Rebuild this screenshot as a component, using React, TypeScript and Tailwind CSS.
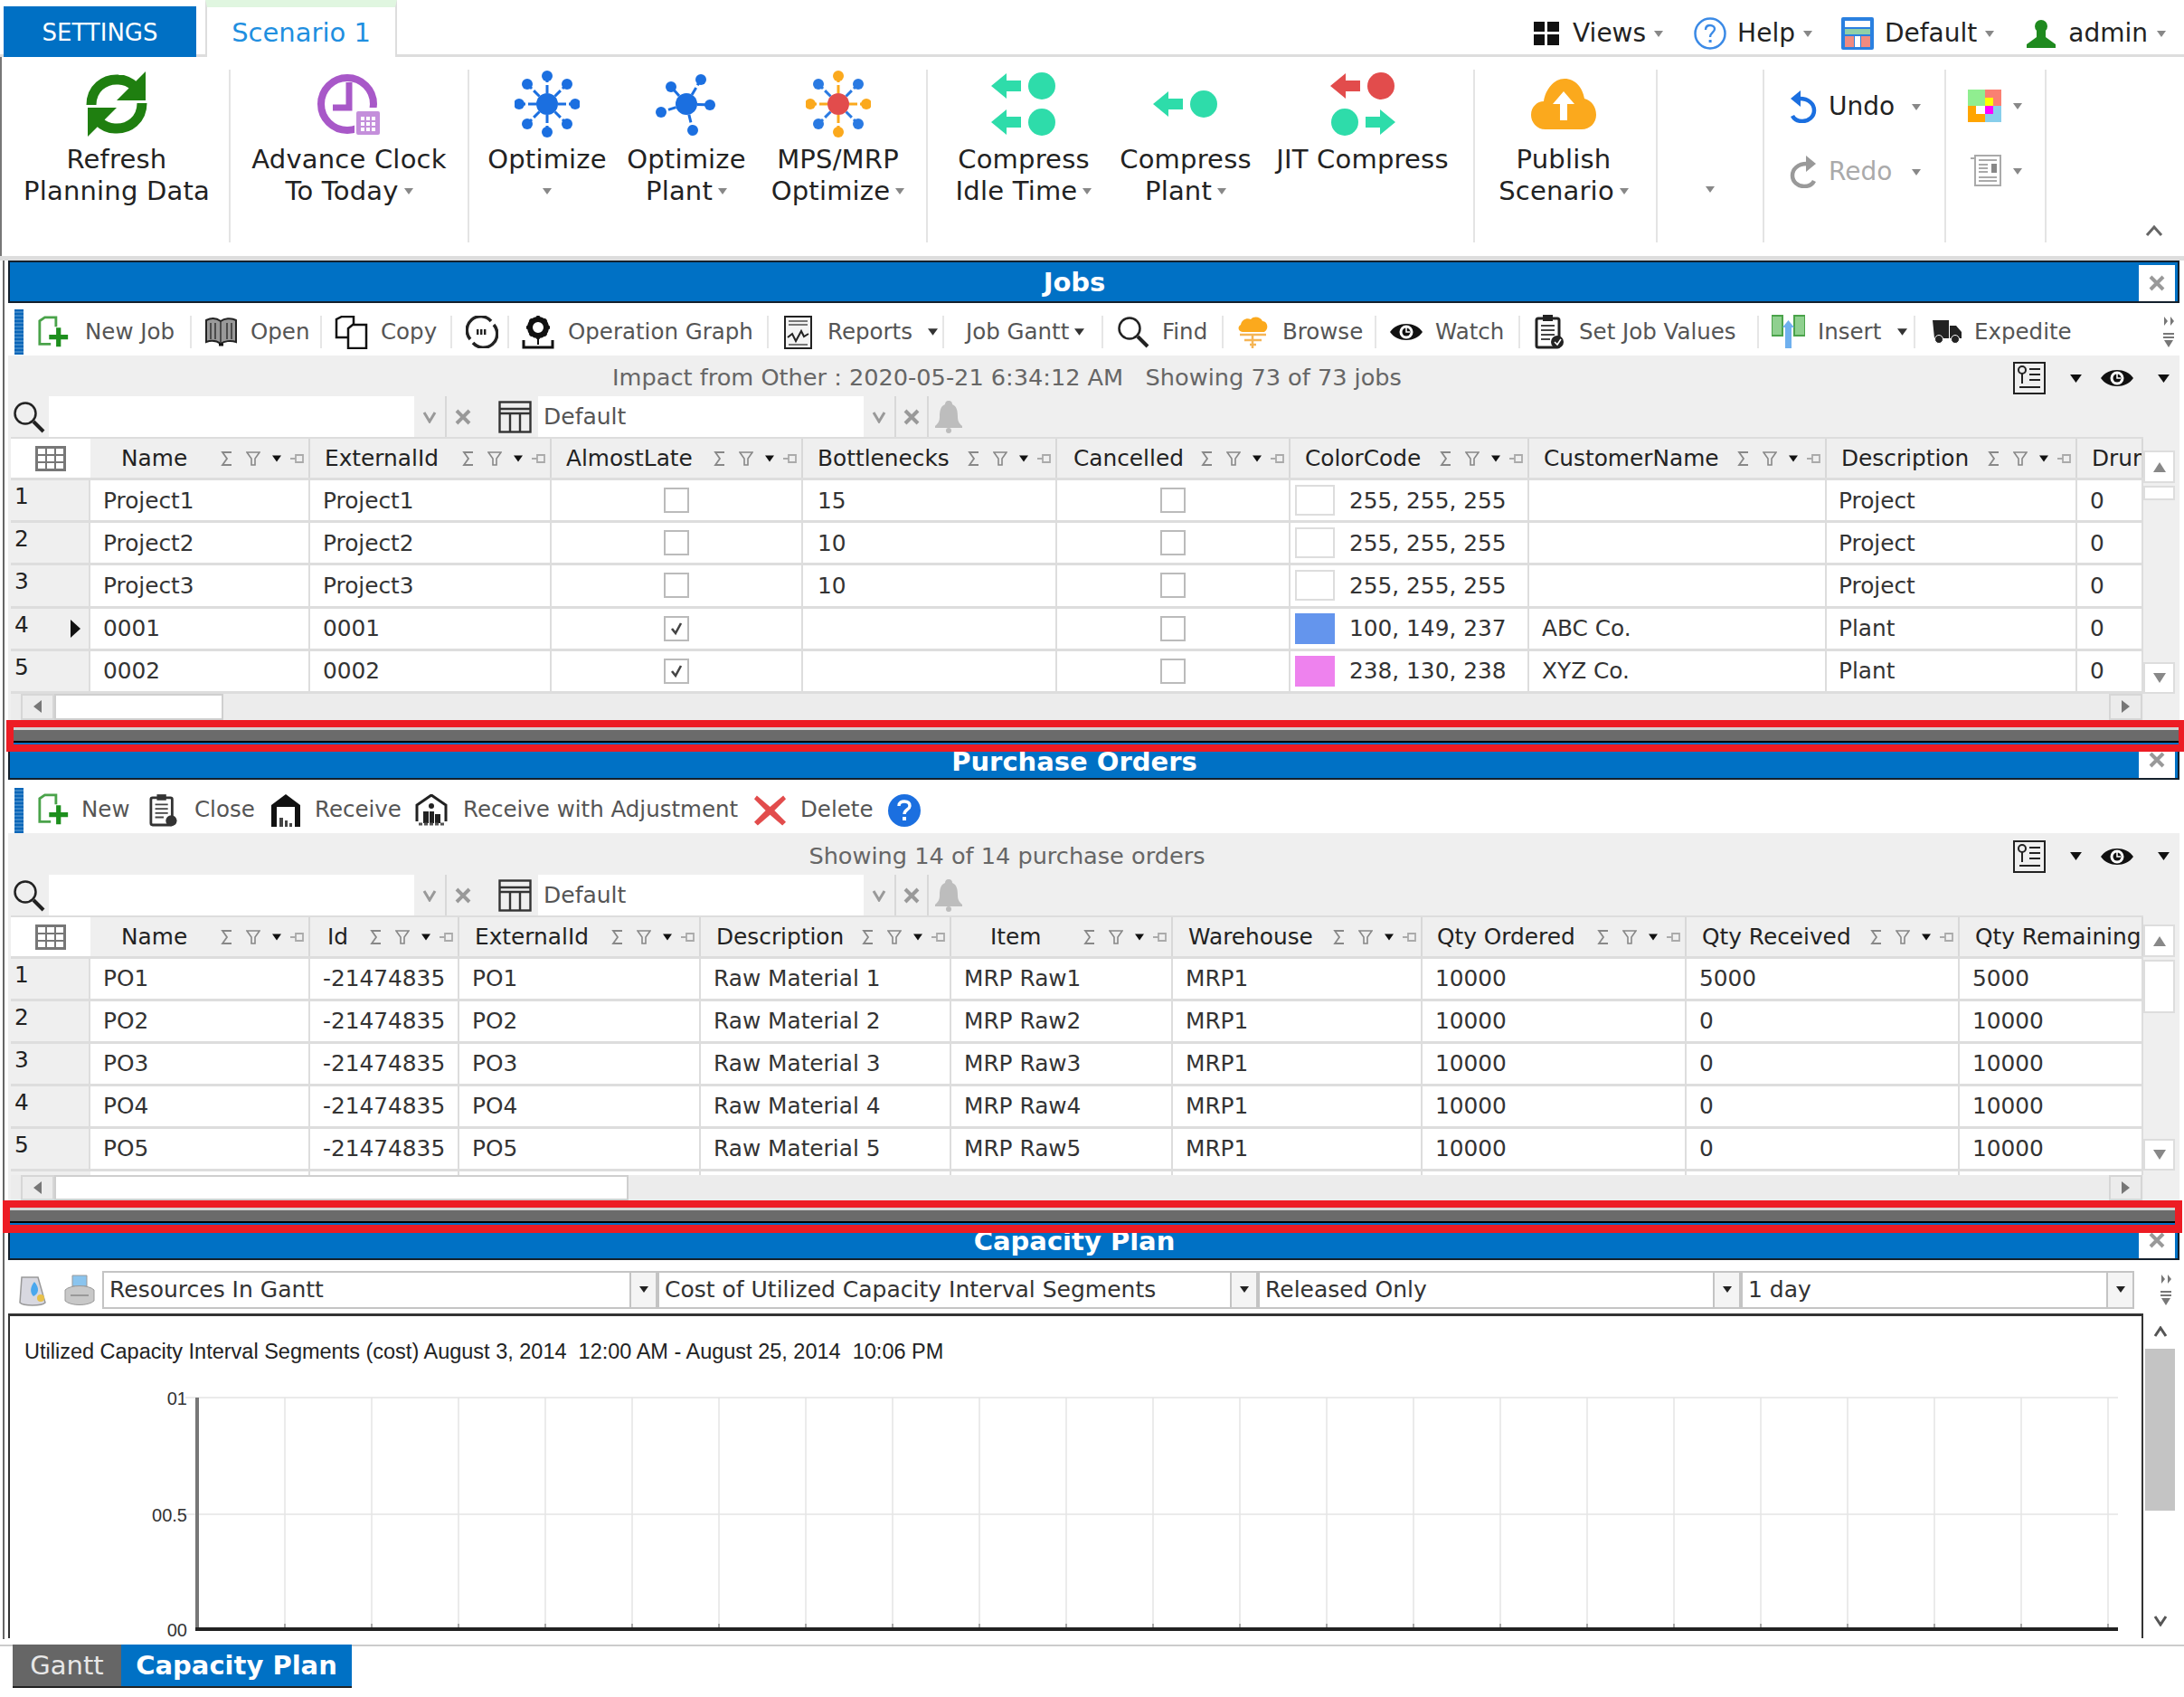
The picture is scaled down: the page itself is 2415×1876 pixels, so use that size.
import React from "react";

const Caret = ({ cls = "text-[#888]", w = 10, h = 7 }: { cls?: string; w?: number; h?: number }) => (
  <svg width={w} height={h} viewBox="0 0 10 7" className={`shrink-0 ${cls}`}><path d="M0 0H10L5 7Z" fill="currentColor" /></svg>
);

const Refresh = () => (
  <svg width="72" height="74" viewBox="0 0 72 74">
    <g fill="none" stroke="#1f7f10" strokeWidth="11">
      <path d="M8 38C8 20 22 9 38 10C46 10 51 13 56 18" />
      <path d="M64 36C64 54 50 65 34 64C26 64 21 61 16 56" />
    </g>
    <path d="M68 1V33H36Z" fill="#1f7f10" />
    <path d="M4 73V41H36Z" fill="#1f7f10" />
  </svg>
);
const ClockCal = () => (
  <svg width="72" height="72" viewBox="0 0 72 72">
    <circle cx="34" cy="36" r="29" fill="none" stroke="#a858c8" strokeWidth="8" />
    <path d="M36 12V40H18" fill="none" stroke="#a858c8" strokeWidth="7" />
    <rect x="42" y="40" width="29" height="31" fill="#fff" />
    <rect x="44" y="44" width="26" height="26" rx="2" fill="#c48fdb" />
    <g fill="#fff">
      {[49, 55, 61].map((x) => [50, 56, 62].map((y) => <rect key={x + "-" + y} x={x} y={y} width="4" height="4" />))}
    </g>
  </svg>
);
const Hub = ({ c, nodes, center = c, cx = 36, cy = 37, r = 12 }: { c: string; center?: string; cx?: number; cy?: number; r?: number; nodes: [number, number, string?][] }) => (
  <svg width="72" height="74" viewBox="0 0 72 74">
    {nodes.map(([x, y, col], i) => (
      <g key={i}>
        <line x1={cx} y1={cy} x2={x} y2={y} stroke={col || c} strokeWidth="3" strokeDasharray="9 3" />
        <circle cx={x} cy={y} r="6" fill={col || c} />
      </g>
    ))}
    <circle cx={cx} cy={cy} r={r} fill={center} />
  </svg>
);
const Arrow = ({ dir, c, y, x }: { dir: "l" | "r"; c: string; y: number; x: number }) => (
  <path d={dir === "l" ? `M${x} ${y}L${x + 17} ${y - 14}V${y - 6}H${x + 33}V${y + 6}H${x + 17}V${y + 14}Z` : `M${x + 33} ${y}L${x + 16} ${y - 14}V${y - 6}H${x}V${y + 6}H${x + 16}V${y + 14}Z`} fill={c} />
);
const Teal = "#2edcaa";
const Red = "#e24c4c";
const CompressIdle = () => (
  <svg width="72" height="72" viewBox="0 0 72 72">
    <Arrow dir="l" c={Teal} y={16} x={0} /><circle cx="56" cy="16" r="15" fill={Teal} />
    <Arrow dir="l" c={Teal} y={56} x={0} /><circle cx="56" cy="56" r="15" fill={Teal} />
  </svg>
);
const CompressPlant = () => (
  <svg width="72" height="32" viewBox="0 0 72 32">
    <Arrow dir="l" c={Teal} y={16} x={0} /><circle cx="56" cy="16" r="15" fill={Teal} />
  </svg>
);
const JIT = () => (
  <svg width="72" height="72" viewBox="0 0 72 72">
    <Arrow dir="l" c={Red} y={16} x={0} /><circle cx="56" cy="16" r="15" fill={Red} />
    <circle cx="16" cy="56" r="15" fill={Teal} /><Arrow dir="r" c={Teal} y={56} x={39} />
  </svg>
);
const Cloud = () => (
  <svg width="72" height="56" viewBox="0 0 72 56">
    <path d="M16 56C6 56 0 48 0 40C0 31 7 25 14 25C16 12 25 0 37 0C49 0 57 10 59 22C67 24 72 31 72 40C72 49 65 56 56 56Z" fill="#fba91d" />
    <path d="M36 14L48 28H40V46H32V28H24Z" fill="#fff" />
  </svg>
);
const Undo = ({ c, flip }: { c: string; flip?: boolean }) => (
  <svg width="32" height="36" viewBox="0 0 32 36" className={flip ? "-scale-x-100" : ""}>
    <path d="M12 9C22 9 28 15 28 22C28 29 22 34 15 34C10 34 6 32 4 28" fill="none" stroke={c} strokeWidth="4.5" />
    <path d="M13 0V18L2 9Z" fill={c} />
  </svg>
);
const Palette = () => (
  <svg width="37" height="36" viewBox="0 0 37 36">
    <rect width="19" height="18" fill="#90ee90" /><rect x="19" width="18" height="18" fill="#fa8072" />
    <rect y="18" width="19" height="18" fill="#ffa500" /><rect x="19" y="18" width="18" height="18" fill="#87ceeb" />
    <rect x="19" y="9" width="9" height="9" fill="#ffff00" /><rect x="19" y="18" width="9" height="9" fill="#ff00ff" /><rect x="9" y="18" width="10" height="9" fill="#fff" />
  </svg>
);
const NewsDoc = () => (
  <svg width="37" height="36" viewBox="0 0 37 36" fill="none" stroke="#aaa" strokeWidth="2">
    <path d="M3 4H8V34H30V32" /><rect x="8" y="1" width="28" height="33" fill="#fff" />
    <path d="M12 6H32M12 25H32M12 29H32M12 11H22M12 15H22M12 19H22" /><rect x="26" y="10" width="6" height="10" fill="#888" stroke="none" />
  </svg>
);

const NewDoc = () => (
  <svg width="39" height="37" viewBox="0 0 39 37" fill="none">
    <path d="M16 32H3V5L9 1H22V12" stroke="#4aa34a" strokeWidth="3" />
    <path d="M25 13V35M14 24H36" stroke="#1d8f1d" strokeWidth="5.5" />
  </svg>
);
const Book = () => (
  <svg width="37" height="32" viewBox="0 0 37 32">
    <path d="M2 3C8 0 14 1 18 4C22 1 29 0 35 3V27C29 25 22 26 18 29C14 26 8 25 2 27Z" fill="#999" stroke="#222" strokeWidth="2" />
    <path d="M7 6V24M12 6V24M25 6V24M30 6V24M18 4V29" stroke="#333" strokeWidth="1.5" />
    <path d="M16 30H21" stroke="#111" strokeWidth="3" />
  </svg>
);
const Copy = () => (
  <svg width="37" height="37" viewBox="0 0 37 37" fill="#fff" stroke="#111" strokeWidth="2.5">
    <path d="M2 24V4L8 1H21V24Z" /><path d="M15 36V14L20 10H35V36Z" />
  </svg>
);
const AbcCycle = () => (
  <svg width="36" height="36" viewBox="0 0 36 36" fill="none" stroke="#222" strokeWidth="3.5">
    <path d="M5 26A15 15 0 0 1 28 6" /><path d="M31 10A15 15 0 0 1 8 30" />
    <path d="M12 18H24" strokeWidth="6" strokeDasharray="2.4 1.6" />
  </svg>
);
const GearTray = () => (
  <svg width="37" height="37" viewBox="0 0 37 37">
    <circle cx="18" cy="13" r="9" fill="none" stroke="#111" strokeWidth="6" />
    <path d="M18 0V26M5 13H31M9 4L27 22M27 4L9 22" stroke="#111" strokeWidth="3.5" strokeDasharray="5 16" />
    <circle cx="18" cy="13" r="3.5" fill="#fff" />
    <path d="M2 27V35H34V27" fill="none" stroke="#111" strokeWidth="3" />
    <path d="M18 24V32" stroke="#111" strokeWidth="2" />
  </svg>
);
const Report = () => (
  <svg width="33" height="37" viewBox="0 0 33 37" fill="none" stroke="#222" strokeWidth="2">
    <rect x="2" y="1" width="29" height="35" fill="#f4f4f4" />
    <path d="M6 6H27M6 10H27" stroke="#777" />
    <path d="M5 24L10 20L14 28L20 17L23 23L28 20" strokeWidth="2" />
    <path d="M6 32H27" stroke="#777" />
  </svg>
);
const Mag = ({ s = 36 }: { s?: number }) => (
  <svg width={s} height={s} viewBox="0 0 36 36" fill="none" stroke="#222">
    <circle cx="14" cy="14" r="11.5" strokeWidth="2.5" /><path d="M23 23L34 34" strokeWidth="4" />
  </svg>
);
const Browse = () => (
  <svg width="35" height="36" viewBox="0 0 35 36">
    <path d="M6 18C1 18 0 12 4 10C5 4 11 2 15 4C18 0 26 1 28 6C33 6 36 14 30 18Z" fill="#fba91d" />
    <path d="M3 21H32M8 27H27M14 32H21M17 20V36" stroke="#f5b555" strokeWidth="2.5" />
  </svg>
);
const Eye = ({ w = 36, h = 24 }: { w?: number; h?: number }) => (
  <svg width={w} height={h} viewBox="0 0 36 24">
    <path d="M0 12C8 0 28 0 36 12C28 24 8 24 0 12Z" fill="#111" />
    <circle cx="18" cy="12" r="7.5" fill="#fff" /><circle cx="18" cy="12" r="4.5" fill="#111" />
    <path d="M18 7V12H22" stroke="#fff" strokeWidth="1.5" fill="none" />
  </svg>
);
const Clip = () => (
  <svg width="33" height="38" viewBox="0 0 33 38">
    <rect x="2" y="4" width="25" height="32" rx="2" fill="#fff" stroke="#222" strokeWidth="3" />
    <rect x="9" y="0" width="11" height="7" fill="#222" />
    <path d="M7 12H22M7 17H22M7 22H22M7 27H17" stroke="#444" strokeWidth="2" />
    <circle cx="25" cy="30" r="7" fill="#222" /><path d="M22 30L25 33L29 27" stroke="#fff" strokeWidth="1.6" fill="none" />
  </svg>
);
const Insert = () => (
  <svg width="37" height="38" viewBox="0 0 37 38">
    <rect x="0" y="1" width="12" height="22" fill="#8fd08f" stroke="#4aa34a" strokeWidth="2" />
    <rect x="25" y="1" width="12" height="22" fill="#8fd08f" stroke="#4aa34a" strokeWidth="2" />
    <path d="M18.5 6L25 14H22V37H15V14H12Z" fill="#6fb0ee" />
  </svg>
);
const Truck = () => (
  <svg width="36" height="26" viewBox="0 0 36 26">
    <path d="M4 0H22V20H6ZM23 6H30L36 13V20H23Z" fill="#222" />
    <circle cx="11" cy="21" r="4.5" fill="#222" stroke="#fff" /><circle cx="29" cy="21" r="4.5" fill="#222" stroke="#fff" />
  </svg>
);
const ClipSmall = () => (
  <svg width="31" height="38" viewBox="0 0 33 38">
    <rect x="2" y="4" width="25" height="32" rx="2" fill="#fff" stroke="#333" strokeWidth="3" />
    <rect x="9" y="0" width="11" height="7" fill="#333" />
    <path d="M7 12H22M7 17H22M7 22H22M7 27H17" stroke="#444" strokeWidth="2" />
    <circle cx="26" cy="31" r="6.5" fill="#333" />
  </svg>
);
const Warehouse = () => (
  <svg width="32" height="36" viewBox="0 0 32 36">
    <path d="M0 36V12L16 0L32 12V36H26V14H6V36Z" fill="#111" />
    <rect x="6" y="14" width="20" height="22" fill="#fff" /><path d="M9 36V26H13V36ZM15 36V29H18V36ZM20 36V32H23V36Z" fill="#444" />
  </svg>
);
const WarehouseAdj = () => (
  <svg width="36" height="36" viewBox="0 0 36 36">
    <path d="M2 30V12L18 1L34 12V30" fill="#fff" stroke="#222" strokeWidth="3" />
    <circle cx="18" cy="13" r="3" fill="#222" />
    <path d="M9 32V19H15V32ZM16 32V19H21V32ZM22 32V22H28V32Z" fill="#222" />
    <path d="M4 33H32" stroke="#555" strokeWidth="3" strokeDasharray="4 2" />
  </svg>
);
const RedX = () => (
  <svg width="38" height="37" viewBox="0 0 38 37"><path d="M4 2L19 15L34 2L37 6L24 19L37 32L33 36L19 24L5 36L1 32L14 19L1 6Z" fill="#e24c4c" /></svg>
);
const HelpBlue = () => (
  <svg width="36" height="36" viewBox="0 0 36 36">
    <circle cx="18" cy="18" r="18" fill="#1b6fe0" />
    <path d="M12 13C12 9 15 8 18 8C22 8 24 10 24 13C24 17 18 17 18 22" fill="none" stroke="#fff" strokeWidth="3.4" /><rect x="16" y="25" width="4" height="4" fill="#fff" />
  </svg>
);

const Sigma = () => (<svg width="14" height="16" viewBox="0 0 14 16" fill="none" stroke="#888" strokeWidth="1.8" className="shrink-0"><path d="M12 1H2L7 8L2 15H12" /></svg>);
const Funnel = () => (<svg width="16" height="16" viewBox="0 0 16 16" fill="none" stroke="#888" strokeWidth="1.6" className="shrink-0"><path d="M1 1H15L10 8V15H6V8Z" /></svg>);
const Pin = () => (<svg width="16" height="14" viewBox="0 0 16 14" fill="none" stroke="#aaa" strokeWidth="1.8" className="shrink-0"><path d="M0 7H6M6 3H14V11H6Z" /></svg>);
const HeadIcons = () => (
  <div className="ml-auto mr-[4px] flex items-center">
    <Sigma /><div className="w-[14px]" /><Funnel /><div className="w-[13px]" />
    <Caret cls="text-[#111]" w={10} h={8} /><div className="w-[10px]" /><Pin />
  </div>
);
const GridIcon = () => (
  <svg width="34" height="28" viewBox="0 0 34 28" fill="#fff" stroke="#777" strokeWidth="3"><rect x="1.5" y="1.5" width="31" height="25" /><path d="M12 1V27M22 1V27M1 10H33M1 18H33" strokeWidth="2" /></svg>
);
const ColsIcon = () => (
  <svg width="37" height="36" viewBox="0 0 37 36" fill="none" stroke="#333" strokeWidth="2.4"><rect x="1.5" y="1.5" width="34" height="33" /><path d="M1 9H36M1 14H36M13 14V35M24 14V35" /></svg>
);
const ListIcon = () => (
  <svg width="36" height="36" viewBox="0 0 36 36" fill="none" stroke="#222" strokeWidth="2"><rect x="1" y="1" width="34" height="34" /><circle cx="10" cy="9" r="4" /><path d="M10 13V24M18 8H30M18 14H30M18 20H30M7 28H30" /></svg>
);
const Bell = () => (
  <svg width="32" height="36" viewBox="0 0 32 36" fill="#bdbdbd"><path d="M16 0C19 0 20 2 20 4C25 6 26 11 26 18C26 24 29 26 31 28V30H1V28C3 26 6 24 6 18C6 11 7 6 12 4C12 2 13 0 16 0Z" /><circle cx="16" cy="33" r="3" /></svg>
);
const Cross = ({ c = "#999", s = 20, w = 4 }: { c?: string; s?: number; w?: number }) => (
  <svg width={s} height={s} viewBox="0 0 20 20"><path d="M3 3L17 17M17 3L3 17" stroke={c} strokeWidth={w} /></svg>
);
const Vee = () => (<svg width="18" height="14" viewBox="0 0 18 14"><path d="M3 2L9 12L15 2" fill="none" stroke="#999" strokeWidth="3" /></svg>);
const Overflow = () => (
  <div className="flex w-[14px] flex-col items-center gap-[8px]">
    <svg width="14" height="10" viewBox="0 0 14 10"><path d="M2 0L6 5L2 10ZM9 0L13 5L9 10Z" fill="#777" /></svg>
    <svg width="12" height="16" viewBox="0 0 12 16"><path d="M0 1H12M0 5H12" stroke="#777" strokeWidth="2" /><path d="M1 8H11L6 16Z" fill="#777" /></svg>
  </div>
);

const R = ({ cls, icon, l1, l2, caret = true }: { cls: string; icon: React.ReactNode; l1?: string; l2?: string; caret?: boolean }) => (
  <div className={`flex shrink-0 flex-col items-center ${cls}`}>
    <div className="flex h-[76px] items-center justify-center">{icon}</div>
    <div className="mt-[6px] text-center text-[29px] leading-[35px] tracking-[0.2px] text-[#222] whitespace-nowrap">{l1}</div>
    <div className="flex h-[35px] items-center gap-[6px] text-[29px] leading-[35px] tracking-[0.2px] text-[#222] whitespace-nowrap">
      {l2}{caret && <Caret />}
    </div>
  </div>
);

const Ti = ({ w, icon, text, sep = true, cls = "pl-[14px] gap-[14px]", children }: { w: string; icon?: React.ReactNode; text?: string; sep?: boolean; cls?: string; children?: React.ReactNode }) => (
  <div className={`flex h-[36px] shrink-0 items-center ${w} ${cls} ${sep ? "border-r-2 border-[#e6e6e6]" : ""}`}>
    {icon && <div className="flex w-[37px] shrink-0 justify-center">{icon}</div>}
    {text && <span className="whitespace-nowrap">{text}</span>}
    {children}
  </div>
);

const PanelHeader = ({ title, cls, text }: { title: string; cls: string; text: string }) => (
  <div className={`flex shrink-0 items-center overflow-hidden border-2 border-[#14202c] bg-[#0071c5] pr-[3px] ${cls}`}>
    <div className={`flex-1 text-center text-[29px] font-bold leading-[30px] whitespace-nowrap text-white ${text}`}>{title}</div>
    <div className="flex h-[40px] w-[40px] shrink-0 items-center justify-center self-end bg-white"><Cross /></div>
  </div>
);

const Status = ({ text, h }: { text: string; h: string }) => (
  <div className={`flex shrink-0 items-center bg-[#efefef] pr-[11px] pt-[5px] ${h}`}>
    <div className="flex-1 pr-[8px] text-center text-[25.6px] leading-none whitespace-nowrap text-[#666]" style={{ whiteSpace: "pre" }}>{text}</div>
    <div className="flex items-center"><ListIcon /><div className="w-[27px]" /><Caret cls="text-[#111]" w={13} h={9} /><div className="w-[21px]" /><Eye /><div className="w-[27px]" /><Caret cls="text-[#111]" w={13} h={9} /></div>
  </div>
);

const Filter = () => (
  <div className="flex h-[45px] shrink-0 items-stretch bg-[#efefef] text-[25px] text-[#555]">
    <div className="flex w-[45px] items-center justify-center"><Mag /></div>
    <div className="w-[404px] bg-white" />
    <div className="flex w-[36px] items-center justify-center border-r-2 border-[#d8d8d8]"><Vee /></div>
    <div className="flex w-[36px] items-center justify-center"><Cross /></div>
    <div className="flex w-[65px] items-center justify-end pr-[7px]"><ColsIcon /></div>
    <div className="flex w-[360px] items-center bg-white pl-[6px]">Default</div>
    <div className="flex w-[36px] items-center justify-center border-r-2 border-[#d8d8d8]"><Vee /></div>
    <div className="flex w-[36px] items-center justify-center border-r-2 border-[#d8d8d8]"><Cross /></div>
    <div className="flex w-[44px] items-center justify-center"><Bell /></div>
  </div>
);

const Head = ({ label, cls = "pl-[16px]", icons = true }: { label: string; cls?: string; icons?: boolean }) => (
  <div className={`flex items-center overflow-hidden border-r-2 border-[#d8d8d8] whitespace-nowrap text-[#222] ${cls}`}>
    {label}{icons && <HeadIcons />}
  </div>
);

const RowNum = ({ n, active }: { n: number; active?: boolean }) => (
  <div className="flex items-start border-r-2 border-b-[3px] border-[#dddddd] bg-[#efefef] pl-[4px] text-[#222]">
    <span className="-mt-[1px]">{n}</span>
    {active && <svg width="11" height="20" viewBox="0 0 11 20" className="ml-auto mr-[9px] mt-[12px]"><path d="M0 0L11 10L0 20Z" fill="#111" /></svg>}
  </div>
);
const Cell = ({ children, cls = "pl-[14px]" }: { children?: React.ReactNode; cls?: string }) => (
  <div className={`flex items-center overflow-hidden border-r-2 border-b-[3px] border-[#dddddd] bg-white whitespace-nowrap text-[#333] ${cls}`}>{children}</div>
);
const Check = ({ on }: { on?: boolean }) => (
  <div className="flex w-full justify-center">
    <div className="flex h-[28px] w-[28px] items-center justify-center border-2 border-[#bbbbbb] bg-white">
      {on && <svg width="16" height="16" viewBox="0 0 16 16"><path d="M3 8L7 13L13 2" fill="none" stroke="#444" strokeWidth="2.6" /></svg>}
    </div>
  </div>
);
const ColorC = ({ bg, text }: { bg: string; text: string }) => (
  <div className="flex items-center pl-[5px]">
    <div className={`h-[34px] w-[44px] shrink-0 border-2 ${bg}`} />
    <span className="ml-[16px]">{text}</span>
  </div>
);

const VBar = ({ upCls, thumb, bottom }: { upCls: string; thumb: string; bottom: string }) => (
  <div className={`flex w-[35px] shrink-0 flex-col bg-[#efefef] ${bottom}`}>
    <div className={`flex h-[36px] w-full items-center justify-center border-2 border-[#dddddd] bg-white ${upCls}`}>
      <svg width="14" height="11" viewBox="0 0 14 11"><path d="M0 11L7 0L14 11Z" fill="#888" /></svg>
    </div>
    <div className={`mt-[3px] border-2 border-[#dddddd] bg-white ${thumb}`} />
    <div className="mt-auto flex h-[35px] w-full items-center justify-center border-2 border-[#dddddd] bg-white">
      <svg width="14" height="11" viewBox="0 0 14 11"><path d="M0 0L7 11L14 0Z" fill="#888" /></svg>
    </div>
  </div>
);
const HBar = ({ thumb, h }: { thumb: string; h: string }) => (
  <div className={`flex shrink-0 items-stretch bg-[#ececec] pl-[11px] pr-[1px] ${h}`}>
    <div className="flex w-[37px] items-center justify-center border-2 border-[#d6d6d6]"><svg width="9" height="14" viewBox="0 0 9 14"><path d="M9 0L0 7L9 14Z" fill="#777" /></svg></div>
    <div className={`border-2 border-[#cfcfcf] bg-white ${thumb}`} />
    <div className="ml-auto flex w-[37px] items-center justify-center border-2 border-[#d6d6d6]"><svg width="9" height="14" viewBox="0 0 9 14"><path d="M0 0L9 7L0 14Z" fill="#777" /></svg></div>
  </div>
);

const jobRows = [
  ["Project1", "Project1", false, "15", false, "w", "Project"],
  ["Project2", "Project2", false, "10", false, "w", "Project"],
  ["Project3", "Project3", false, "10", false, "w", "Project"],
  ["0001", "0001", true, "", false, "b", "Plant"],
  ["0002", "0002", true, "", false, "m", "Plant"],
];
const jobCols = "grid grid-cols-[88px_243px_267px_278px_281px_258px_264px_329px_277px_73px]";
const poCols = "grid grid-cols-[88px_243px_165px_267px_277px_245px_276px_292px_302px_203px]";
const poRows = [
  ["PO1", "Raw Material 1", "MRP Raw1", "5000", "5000"],
  ["PO2", "Raw Material 2", "MRP Raw2", "0", "10000"],
  ["PO3", "Raw Material 3", "MRP Raw3", "0", "10000"],
  ["PO4", "Raw Material 4", "MRP Raw4", "0", "10000"],
  ["PO5", "Raw Material 5", "MRP Raw5", "0", "10000"],
];

const Splitter = ({ outer, inner }: { outer: string; inner: string }) => (
  <div className={`shrink-0 border-[#ed1c24] ${outer}`}>
    <div className={`flex flex-col ${inner}`}>
      <div className="h-[3px] bg-[#d4d4d4]" />
      <div className="flex-1 bg-[#6b6b6b]" />
      <div className="h-[2px] bg-black" />
      <div className="h-[2px] bg-[#0071c5]" />
    </div>
  </div>
);

const Combo = ({ w, text }: { w: string; text: string }) => (
  <div className={`flex h-[42px] shrink-0 items-stretch border-2 border-[#c4c4c4] bg-white ${w}`}>
    <div className="flex flex-1 items-center overflow-hidden whitespace-nowrap pl-[6px] text-[#333]">{text}</div>
    <div className="flex w-[29px] shrink-0 items-center justify-center border-l-2 border-[#c4c4c4] bg-[#f4f4f4]"><Caret cls="text-[#222]" w={10} h={9} /></div>
  </div>
);

const gridXs = Array.from({ length: 23 }, (_, i) => 208 + 96 * i);

export default function App() {
  return (
    <div className="relative h-[1876px] w-[2415px] overflow-hidden bg-white font-['DejaVu_Sans']">
      {/* Top tabs */}
      <div className="flex h-[63px] items-end justify-between border-b-[3px] border-[#dddddd]">
        <div className="flex items-end">
          <div className="-mb-[3px] ml-[4px] flex h-[56px] w-[213px] items-center justify-center bg-[#0070c4] pt-[2px] text-[26px] text-white">SETTINGS</div>
          <div className="-mb-[3px] ml-[10px] flex h-[63px] w-[212px] items-center justify-center border-x-2 border-t-[8px] border-x-[#dddddd] border-t-[#e0f6e0] bg-white pt-[3px] text-[29px] text-[#1f8fe0]">Scenario 1</div>
        </div>
        <div className="flex h-[56px] items-center pr-[20px] pt-[10px] text-[28px] text-[#222]">
          <svg width="28" height="26" viewBox="0 0 28 26"><path d="M0 0H12V11H0ZM15 0H28V11H15ZM0 14H12V26H0ZM15 14H28V26H15Z" fill="#111" /></svg>
          <span className="ml-[15px]">Views</span><div className="w-[9px]" /><Caret />
          <svg className="ml-[34px]" width="36" height="36" viewBox="0 0 36 36"><circle cx="18" cy="18" r="16.5" fill="#fff" stroke="#3b8ae6" strokeWidth="2.5" /><path d="M13 14C13 10 15 9 18 9C21 9 23 11 23 13C23 17 18 17 18 22" fill="none" stroke="#3b8ae6" strokeWidth="2.4" /><rect x="16.6" y="25" width="3" height="3" fill="#3b8ae6" /></svg>
          <span className="ml-[12px]">Help</span><div className="w-[9px]" /><Caret />
          <svg className="ml-[32px]" width="36" height="36" viewBox="0 0 36 36"><rect width="36" height="36" rx="2" fill="#2a80e0" /><rect x="4" y="4" width="28" height="7" fill="#fff" /><rect x="4" y="13" width="28" height="6" fill="#90d0a8" /><rect x="4" y="21" width="10" height="12" fill="#f08a80" /><rect x="22" y="21" width="10" height="12" fill="#f08a80" /><rect x="15" y="21" width="6" height="12" fill="#fff" /></svg>
          <span className="ml-[12px]">Default</span><div className="w-[9px]" /><Caret />
          <svg className="ml-[36px]" width="32" height="32" viewBox="0 0 32 32"><circle cx="16" cy="8" r="7" fill="#1f8a1f" /><path d="M11 12H21V20L32 28V32H0V28L11 20Z" fill="#1f8a1f" /></svg>
          <span className="ml-[14px]">admin</span><div className="w-[10px]" /><Caret />
        </div>
      </div>

      {/* Ribbon */}
      <div className="flex h-[220px] border-l-2 border-[#777777] pb-[15px] pt-[14px]">
        <div className="flex w-[253px] shrink-0 border-r-2 border-[#e4e4e4]">
          <R cls="w-[254px]" icon={<Refresh />} l1="Refresh" l2="Planning Data" caret={false} />
        </div>
        <div className="flex w-[264px] shrink-0 border-r-2 border-[#e4e4e4]">
          <R cls="w-[262px]" icon={<ClockCal />} l1="Advance Clock" l2="To Today" />
        </div>
        <div className="flex w-[507px] shrink-0 border-r-2 border-[#e4e4e4]">
          <R cls="w-[172px]" l1="Optimize" icon={<Hub c="#1b6fe0" nodes={[[36,6],[36,68],[5,37],[67,37],[14,15],[58,15],[14,59],[58,59]]} />} />
          <R cls="w-[136px]" l1="Optimize" l2="Plant" icon={<Hub c="#1b6fe0" nodes={[[52,10],[19,18],[62,38],[8,46],[43,66]]} />} />
          <R cls="w-[199px]" l1="MPS/MRP" l2="Optimize" icon={<Hub c="#3b7fe0" center="#e24c4c" nodes={[[36,6,"#fba91d"],[36,68,"#fba91d"],[5,37,"#fba91d"],[67,37,"#fba91d"],[14,15,"#2a7ae2"],[58,15,"#2a7ae2"],[14,59,"#2a7ae2"],[58,59,"#2a7ae2"]]} />} />
        </div>
        <div className="flex w-[605px] shrink-0 border-r-2 border-[#e4e4e4]">
          <R cls="w-[212px]" l1="Compress" l2="Idle Time" icon={<CompressIdle />} />
          <R cls="w-[146px]" l1="Compress" l2="Plant" icon={<CompressPlant />} />
          <R cls="w-[245px]" l1="JIT Compress" caret={false} icon={<JIT />} />
        </div>
        <div className="flex w-[202px] shrink-0 border-r-2 border-[#e4e4e4]">
          <R cls="w-[196px]" l1="Publish" l2="Scenario" icon={<Cloud />} />
        </div>
        <div className="flex w-[118px] shrink-0 border-r-2 border-[#e4e4e4]">
          <div className="flex w-[116px] flex-col items-center justify-start pt-[129px]"><Caret /></div>
        </div>
        <div className="flex w-[201px] shrink-0 flex-col gap-[36px] border-r-2 border-[#e4e4e4] pl-[27px] pt-[23px] text-[28px]">
          <div className="flex h-[36px] items-center"><Undo c="#1b6fe0" /><span className="ml-[12px] w-[92px] text-[#222]">Undo</span><Caret /></div>
          <div className="flex h-[36px] items-center"><Undo c="#999" flip /><span className="ml-[12px] w-[92px] text-[#aaa]">Redo</span><Caret /></div>
        </div>
        <div className="flex w-[111px] shrink-0 flex-col gap-[36px] border-r-2 border-[#e4e4e4] pl-[24px] pt-[22px]">
          <div className="flex h-[36px] items-center gap-[13px]"><Palette /><Caret /></div>
          <div className="flex h-[36px] items-center gap-[13px]"><NewsDoc /><Caret /></div>
        </div>
        <div className="flex flex-1 items-end justify-end pb-[6px] pr-[23px]">
          <svg width="20" height="14" viewBox="0 0 20 14"><path d="M2 12L10 3L18 12" fill="none" stroke="#666" strokeWidth="3" /></svg>
        </div>
      </div>
      <div className="h-[5px] bg-[#dddddd]" />

      {/* Panels */}
      <div className="ml-[3px] flex h-[1524px] flex-col border-l-2 border-[#666666] pl-[4px] pr-[5px]">
        {/* Jobs */}
        <PanelHeader title="Jobs" cls="h-[47px]" text="" />
        <div className="flex h-[58px] shrink-0 items-center pt-[6px] text-[24.5px] text-[#555]">
          <div className="ml-[7px] mr-[4px] h-[50px] w-[10px] shrink-0 bg-[repeating-linear-gradient(0deg,#0a66b8_0px,#0a66b8_2px,#3b86c8_2px,#3b86c8_4px)]" />
          <Ti w="w-[182px]" cls="pl-[11px] gap-[16px]" icon={<NewDoc />} text="New Job" />
          <Ti w="w-[144px]" icon={<Book />} text="Open" />
          <Ti w="w-[144px]" icon={<Copy />} text="Copy" />
          <Ti w="w-[63px]" icon={<AbcCycle />} />
          <Ti w="w-[287px]" icon={<GearTray />} text="Operation Graph" />
          <Ti w="w-[194px]" icon={<Report />} text="Reports"><span className="ml-[3px]"><Caret cls="text-[#333]" w={11} h={8} /></span></Ti>
          <Ti w="w-[176px]" cls="pl-[24px]" text="Job Gantt"><span className="ml-[6px]"><Caret cls="text-[#333]" w={11} h={8} /></span></Ti>
          <Ti w="w-[133px]" icon={<Mag />} text="Find" />
          <Ti w="w-[169px]" icon={<Browse />} text="Browse" />
          <Ti w="w-[159px]" icon={<Eye />} text="Watch" />
          <Ti w="w-[264px]" icon={<Clip />} text="Set Job Values" />
          <Ti w="w-[173px]" icon={<Insert />} text="Insert"><span className="ml-[4px]"><Caret cls="text-[#333]" w={11} h={8} /></span></Ti>
          <Ti w="w-[192px]" sep={false} icon={<Truck />} text="Expedite" />
          <div className="ml-auto pr-[5px]"><Overflow /></div>
        </div>
        <Status h="h-[45px]" text="Impact from Other : 2020-05-21 6:34:12 AM   Showing 73 of 73 jobs" />
        <Filter />
        <div className="flex h-[313px] shrink-0 bg-[#efefef] pl-[3px] text-[24.8px]">
          <div className="flex w-[2358px] shrink-0 flex-col">
            <div className={`h-[48px] shrink-0 border-t-2 border-[#dddddd] border-b-[3px] ${jobCols}`}>
              <div className="flex items-center justify-center bg-white"><GridIcon /></div>
              <Head label="Name" cls="pl-[34px]" />
              <Head label="ExternalId" />
              <Head label="AlmostLate" />
              <Head label="Bottlenecks" />
              <Head label="Cancelled" cls="pl-[18px]" />
              <Head label="ColorCode" />
              <Head label="CustomerName" />
              <Head label="Description" />
              <Head label="Drum" icons={false} />
            </div>
            {jobRows.map((r, i) => (
              <div key={i} className={`h-[47.2px] shrink-0 ${jobCols}`}>
                <RowNum n={i + 1} active={i === 3} />
                <Cell>{r[0]}</Cell>
                <Cell>{r[1]}</Cell>
                <Cell cls=""><Check on={r[2] as boolean} /></Cell>
                <Cell cls="pl-[16px]">{r[3]}</Cell>
                <Cell cls=""><Check /></Cell>
                <Cell cls="">
                  {r[5] === "w" && <ColorC bg="bg-white border-[#dddddd]" text="255, 255, 255" />}
                  {r[5] === "b" && <ColorC bg="bg-[#6495ed] border-[#6495ed]" text="100, 149, 237" />}
                  {r[5] === "m" && <ColorC bg="bg-[#ee82ee] border-[#ee82ee]" text="238, 130, 238" />}
                </Cell>
                <Cell>{i === 3 ? "ABC Co." : i === 4 ? "XYZ Co." : ""}</Cell>
                <Cell cls="pl-[13px]">{r[6]}</Cell>
                <Cell>0</Cell>
              </div>
            ))}
            <HBar h="h-[29px]" thumb="w-[187px]" />
          </div>
          <VBar upCls="mt-[15px]" thumb="h-[16px]" bottom="pb-[29px]" />
        </div>

        <Splitter outer="-ml-[2px] -mr-[5px] h-[35px] border-x-[8px] border-y-[8px] border-r-[6px]" inner="h-[19px]" />

        {/* Purchase Orders */}
        <PanelHeader title="Purchase Orders" cls="h-[31px] border-t-0" text="pb-[8px]" />
        <div className="flex h-[59px] shrink-0 items-center pt-[8px] text-[24.5px] text-[#555]">
          <div className="ml-[7px] mr-[4px] h-[50px] w-[10px] shrink-0 bg-[repeating-linear-gradient(0deg,#0a66b8_0px,#0a66b8_2px,#3b86c8_2px,#3b86c8_4px)]" />
          <Ti w="w-[125px]" sep={false} cls="pl-[11px] gap-[12px]" icon={<NewDoc />} text="New" />
          <Ti w="w-[135px]" sep={false} cls="pl-[7px] gap-[16px]" icon={<ClipSmall />} text="Close" />
          <Ti w="w-[160px]" sep={false} cls="pl-[7px] gap-[14px]" icon={<Warehouse />} text="Receive" />
          <Ti w="w-[374px]" sep={false} cls="pl-[8px] gap-[17px]" icon={<WarehouseAdj />} text="Receive with Adjustment" />
          <Ti w="w-[148px]" sep={false} cls="pl-[9px] gap-[15px]" icon={<RedX />} text="Delete" />
          <Ti w="w-[60px]" sep={false} cls="pl-[9px]" icon={<HelpBlue />} />
        </div>
        <Status h="h-[46px]" text="Showing 14 of 14 purchase orders" />
        <Filter />
        <div className="flex h-[315px] shrink-0 bg-[#efefef] pl-[3px] text-[24.8px]">
          <div className="flex w-[2358px] shrink-0 flex-col">
            <div className={`h-[48px] shrink-0 border-t-2 border-[#dddddd] border-b-[3px] ${poCols}`}>
              <div className="flex items-center justify-center bg-white"><GridIcon /></div>
              <Head label="Name" cls="pl-[34px]" />
              <Head label="Id" cls="pl-[19px]" />
              <Head label="ExternalId" cls="pl-[17px]" />
              <Head label="Description" cls="pl-[17px]" />
              <Head label="Item" cls="pl-[43px]" />
              <Head label="Warehouse" cls="pl-[17px]" />
              <Head label="Qty Ordered" />
              <Head label="Qty Received" cls="pl-[17px]" />
              <Head label="Qty Remaining" cls="pl-[17px]" icons={false} />
            </div>
            {poRows.map((r, i) => (
              <div key={i} className={`h-[47px] shrink-0 ${poCols}`}>
                <RowNum n={i + 1} />
                <Cell>{r[0]}</Cell>
                <Cell>-21474835</Cell>
                <Cell>{r[0]}</Cell>
                <Cell>{r[1]}</Cell>
                <Cell>{r[2]}</Cell>
                <Cell>MRP1</Cell>
                <Cell>10000</Cell>
                <Cell>{r[3]}</Cell>
                <Cell>{r[4]}</Cell>
              </div>
            ))}
            <div className={`h-[4px] shrink-0 ${poCols}`}>
              <div className="bg-[#efefef]" />
              {Array.from({ length: 9 }, (_, i) => <div key={i} className="border-r-2 border-[#dddddd] bg-white" />)}
            </div>
            <HBar h="h-[28px]" thumb="w-[635px]" />
          </div>
          <VBar upCls="mt-[10px]" thumb="h-[59px]" bottom="pb-[33px]" />
        </div>

        <Splitter outer="-ml-[6px] -mr-[3px] h-[36px] border-x-[8px] border-y-[8px] border-b-[9px]" inner="h-[19px]" />

        {/* Capacity Plan */}
        <PanelHeader title="Capacity Plan" cls="h-[30px] border-t-0" text="pb-[10px]" />
        <div className="flex h-[59px] shrink-0 items-center pl-[9px] pt-[6px] text-[25px]">
          <svg width="38" height="36" viewBox="0 0 38 36"><path d="M6 4H24L32 32C28 36 8 36 4 32Z" fill="#d8d8e0" stroke="#999" strokeWidth="1.5" /><path d="M20 9C26 16 25 22 19 25C15 21 15 15 20 9Z" fill="#4aa8ee" /><circle cx="27" cy="27" r="4" fill="#e8c14a" /></svg>
          <svg className="ml-[14px]" width="36" height="36" viewBox="0 0 36 36"><path d="M10 2H26V14H10Z" fill="#8ac4ee" stroke="#999" /><path d="M2 18C8 12 28 12 34 18V30C28 36 8 36 2 30Z" fill="#c8c8c8" stroke="#999" /><path d="M8 24H28" stroke="#999" strokeWidth="2" /></svg>
          <div className="ml-[7px]"><Combo w="w-[614px]" text="Resources In Gantt" /></div>
          <Combo w="w-[664px]" text="Cost of Utilized Capacity Interval Segments" />
          <Combo w="w-[534px]" text="Released Only" />
          <Combo w="w-[435px]" text="1 day" />
          <div className="ml-[28px]"><Overflow /></div>
        </div>
        <div className="flex h-[359px] shrink-0">
          <div className="flex w-[2361px] shrink-0 flex-col border-x-2 border-t-[3px] border-[#333333] border-b-0">
            <div className="flex h-[64px] shrink-0 items-end pb-[13px] pl-[16px] font-['Liberation_Sans'] text-[23.5px] leading-none text-[#222]" style={{ whiteSpace: "pre" }}>Utilized Capacity Interval Segments (cost) August 3, 2014  12:00 AM - August 25, 2014  10:06 PM</div>
            <svg width="2357" height="292" viewBox="0 0 2357 292" className="shrink-0">
              <g stroke="#e4e4e4" strokeWidth="1.5">
                <line x1="194" y1="26" x2="2331" y2="26" />
                <line x1="194" y1="155" x2="2331" y2="155" />
                {gridXs.slice(1).map((x) => <line key={x} x1={x} y1="26" x2={x} y2="276" />)}
              </g>
              <g stroke="#888" strokeWidth="1.5">
                {gridXs.slice(1).map((x) => <line key={x} x1={x} y1="276" x2={x} y2="281" />)}
              </g>
              <rect x="205" y="26" width="4" height="258" fill="#777" />
              <rect x="205" y="280" width="2126" height="4" fill="#222" />
              <g fontFamily="Liberation Sans" fontSize="20" fill="#333" textAnchor="end">
                <text x="196" y="34">01</text>
                <text x="196" y="163">00.5</text>
                <text x="196" y="290">00</text>
              </g>
            </svg>
          </div>
          <div className="ml-[2px] flex w-[33px] shrink-0 flex-col">
            <div className="flex h-[39px] items-center justify-center"><svg width="16" height="12" viewBox="0 0 16 12"><path d="M2 11L8 2L14 11" fill="none" stroke="#555" strokeWidth="3" /></svg></div>
            <div className="h-[179px] bg-[#c4c4c4]" />
            <div className="mt-auto flex h-[38px] items-center justify-center"><svg width="16" height="12" viewBox="0 0 16 12"><path d="M2 1L8 10L14 1" fill="none" stroke="#555" strokeWidth="3" /></svg></div>
          </div>
        </div>
      </div>

      {/* Bottom tabs */}
      <div className="mt-[6px] flex h-[48px] border-t-2 border-[#cccccc] pl-[14px] text-[29px] leading-none">
        <div className="-mt-[2px] flex w-[120px] items-center justify-center border-b-2 border-[#222222] bg-[#666666] text-[#e8e8e8]">Gantt</div>
        <div className="-mt-[2px] flex w-[255px] items-center justify-center border-b-2 border-[#222222] bg-[#0071c5] font-bold text-white">Capacity Plan</div>
      </div>
    </div>
  );
}
